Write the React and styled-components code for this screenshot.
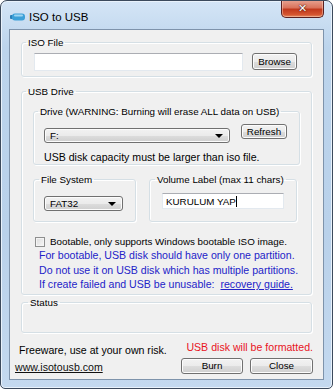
import styled, { createGlobalStyle } from "styled-components";

const GlobalStyle = createGlobalStyle`
  html, body {
    margin: 0;
    padding: 0;
    background: #ffffff;
  }
  body {
    font-family: "Liberation Sans", Arial, sans-serif;
    font-size: 10px;
    color: #000;
  }
`;

const UsbIcon = () => (
  <svg width="16" height="8" viewBox="0 0 16 8">
    <rect x="0" y="2" width="3" height="4" rx="1" fill="#2a7fb8" />
    <rect x="2" y="0.5" width="13" height="7" rx="3" fill="#3ca0d8" />
    <rect x="4" y="1.5" width="9" height="2" rx="1" fill="#9fd6f2" />
  </svg>
);

export default function App() {
  return (
    <>
      <GlobalStyle />
      <Window>
        <TitleBar>
          <TitleLeft>
            <UsbIcon />
            <Title>ISO to USB</Title>
          </TitleLeft>
          <CloseX>✕</CloseX>
        </TitleBar>

        <Client>
          <Group $mt={6} $pad="4px 14px 5px 12px">
            <Legend $ml={-8}>ISO File</Legend>
            <Row $gap={9}>
              <TextBox $w={209} $h={18} />
              <Button $w={45} $h={17}>Browse</Button>
            </Row>
          </Group>

          <Group $mt={8} $pad="7px 11px 2px 11px">
            <Legend $ml={-7}>USB Drive</Legend>

            <Group $pad="0 10px 0 10px">
              <Legend $ml={-6}>Drive (WARNING: Burning will erase ALL data on USB)</Legend>
              <Row $gap={11} $top={6}>
                <Combo $w={186} $mt={4}>F:<Arrow /></Combo>
                <Button $w={46} $h={15}>Refresh</Button>
              </Row>
              <BigText $mt={8}>USB disk capacity must be larger than iso file.</BigText>
            </Group>

            <Row $gap={13} $top={8} $stretch>
              <Group $w={103} $pad="10px 10px 10px 10px">
                <Legend $ml={-5}>File System</Legend>
                <Combo $w={79}>FAT32<Arrow /></Combo>
              </Group>
              <Group $w={148} $pad="7px 12px 8px 12px">
                <Legend $ml={-7}>Volume Label (max 11 chars)</Legend>
                <TextBox $w={122} $h={16}>KURULUM YAP<Caret /></TextBox>
              </Group>
            </Row>

            <CheckRow>
              <CheckBox />
              <span>Bootable, only supports Windows bootable ISO image.</span>
            </CheckRow>
            <Notes>
              <div>For bootable, USB disk should have only one partition.</div>
              <div>Do not use it on USB disk which has multiple partitions.</div>
              <div>
                If create failed and USB be unusable: <Link>recovery guide.</Link>
              </div>
            </Notes>
          </Group>

          <Group $mt={1} $h={37} $pad="0">
            <Legend $ml={6}>Status</Legend>
          </Group>

          <Footer>
            <FooterLeft>
              <BigText $pl={4}>Freeware, use at your own risk.</BigText>
              <SiteLink>www.isotousb.com</SiteLink>
            </FooterLeft>
            <FooterRight>
              <Warning>USB disk will be formatted.</Warning>
              <Row $gap={7}>
                <Button $w={62} $h={16}>Burn</Button>
                <Button $w={63} $h={16}>Close</Button>
              </Row>
            </FooterRight>
          </Footer>
        </Client>
      </Window>
    </>
  );
}

const Window = styled.div`
  width: 333px;
  height: 389px;
  box-sizing: border-box;
  border: 1px solid #3c4a5c;
  border-radius: 7px 7px 5px 5px;
  background: linear-gradient(180deg, #d4e5f6 0%, #bcd4ec 12%, #b9d1ea 60%, #c4d9ef 100%);
  box-shadow: inset 0 0 0 1px #e9f2fb;
  display: flex;
  flex-direction: column;
  overflow: hidden;
`;

const TitleBar = styled.div`
  height: 28px;
  flex-shrink: 0;
  display: flex;
  align-items: flex-start;
  justify-content: space-between;
  padding: 0 8px 0 9px;
`;

const TitleLeft = styled.div`
  display: flex;
  align-items: center;
  gap: 3px;
  margin-top: 9px;
`;

const Title = styled.span`
  font-size: 11.5px;
  line-height: 14px;
  color: #000;
`;

const CloseX = styled.div`
  width: 43px;
  height: 18px;
  box-sizing: border-box;
  margin-top: -1px;
  border: 1px solid #5a2020;
  border-top: none;
  border-radius: 0 0 5px 5px;
  background: linear-gradient(180deg, #e8a493 0%, #d9735c 45%, #c1391d 55%, #d4542f 85%, #e48a62 100%);
  box-shadow: inset 0 0 0 1px rgba(255, 220, 200, 0.45);
  display: flex;
  align-items: center;
  justify-content: center;
  color: #fff;
  font-family: "DejaVu Sans", sans-serif;
  font-weight: bold;
  font-size: 11px;
  text-shadow: 0 0 2px #4a1208, 0 0 1px #4a1208;
`;

const Client = styled.div`
  flex: 1;
  min-height: 0;
  margin: 0 8px 8px 8px;
  border: 1px solid #7e93ab;
  background: #f0f0f0;
  display: flex;
  flex-direction: column;
  padding: 0 11px;
`;

const Group = styled.fieldset`
  margin: ${(p) => p.$mt || 0}px 0 0 0;
  padding: ${(p) => p.$pad};
  border: 1px solid #d5dfe5;
  border-radius: 3px;
  box-shadow: inset 1px 1px 0 #fff, 1px 1px 0 #fff;
  min-width: 0;
  ${(p) => (p.$w ? `width: ${p.$w}px; box-sizing: border-box;` : "")}
  ${(p) => (p.$h ? `height: ${p.$h}px; box-sizing: border-box;` : "")}
`;

const Legend = styled.legend`
  padding: 0 2px;
  margin-left: ${(p) => p.$ml ?? 4}px;
  font-size: 9.8px;
  line-height: 13px;
  white-space: nowrap;
  color: #000;
`;

const Row = styled.div`
  display: flex;
  align-items: ${(p) => (p.$stretch ? "stretch" : "flex-start")};
  gap: ${(p) => p.$gap || 0}px;
  margin-top: ${(p) => p.$top || 0}px;
`;

const TextBox = styled.div`
  width: ${(p) => p.$w}px;
  height: ${(p) => p.$h}px;
  box-sizing: border-box;
  background: #fff;
  border: 1px solid #e3e9ef;
  border-top-color: #abadb3;
  display: flex;
  align-items: center;
  padding-left: 3px;
  font-size: 9.8px;
  white-space: nowrap;
`;

const Caret = styled.span`
  display: inline-block;
  width: 1px;
  height: 11px;
  background: #000;
`;

const Button = styled.div`
  width: ${(p) => p.$w}px;
  height: ${(p) => p.$h}px;
  box-sizing: border-box;
  border: 1px solid #707070;
  border-radius: 3px;
  background: linear-gradient(180deg, #f2f2f2 0%, #ebebeb 50%, #dddddd 51%, #cfcfcf 100%);
  box-shadow: inset 0 0 0 1px #fcfcfc;
  display: flex;
  align-items: center;
  justify-content: center;
  font-size: 9.8px;
  color: #000;
`;

const Combo = styled.div`
  width: ${(p) => p.$w}px;
  height: 15px;
  margin-top: ${(p) => p.$mt || 0}px;
  box-sizing: border-box;
  border: 1px solid #707070;
  border-radius: 3px;
  background: linear-gradient(180deg, #f2f2f2 0%, #ebebeb 50%, #dddddd 51%, #cfcfcf 100%);
  box-shadow: inset 0 0 0 1px #fcfcfc;
  display: flex;
  align-items: center;
  justify-content: space-between;
  padding: 0 6px 0 5px;
  font-size: 9.8px;
`;

const Arrow = styled.span`
  width: 0;
  height: 0;
  border-left: 4px solid transparent;
  border-right: 4px solid transparent;
  border-top: 4px solid #000;
`;

const BigText = styled.div`
  font-size: 10.6px;
  line-height: 13px;
  margin-top: ${(p) => p.$mt || 0}px;
  padding-left: ${(p) => p.$pl || 0}px;
  white-space: nowrap;
`;

const CheckRow = styled.div`
  display: flex;
  align-items: center;
  gap: 5px;
  margin: 13px 0 0 2px;
  font-size: 9.8px;
  line-height: 13px;
  white-space: nowrap;
`;

const CheckBox = styled.span`
  width: 10px;
  height: 10px;
  flex-shrink: 0;
  box-sizing: border-box;
  border: 1px solid #8e8f8f;
  background: linear-gradient(135deg, #dcdcdc 0%, #f6f6f6 100%);
  box-shadow: inset 0 0 0 1px #f4f4f4;
`;

const Notes = styled.div`
  padding-left: 6px;
  color: #2323c8;
  font-size: 10.6px;
  line-height: 14.5px;
  white-space: nowrap;
`;

const Link = styled.span`
  text-decoration: underline;
  margin-left: 3px;
`;

const Footer = styled.div`
  display: flex;
  justify-content: space-between;
  margin: 8px -1px 0 -6px;
`;

const FooterLeft = styled.div`
  display: flex;
  flex-direction: column;
  gap: 4px;
  padding-top: 3px;
`;

const SiteLink = styled.span`
  font-size: 10.6px;
  line-height: 13px;
  text-decoration: underline;
  color: #111;
`;

const FooterRight = styled.div`
  display: flex;
  flex-direction: column;
  align-items: flex-end;
  gap: 4px;
`;

const Warning = styled.div`
  color: #e8141e;
  font-size: 10.6px;
  line-height: 13px;
`;
